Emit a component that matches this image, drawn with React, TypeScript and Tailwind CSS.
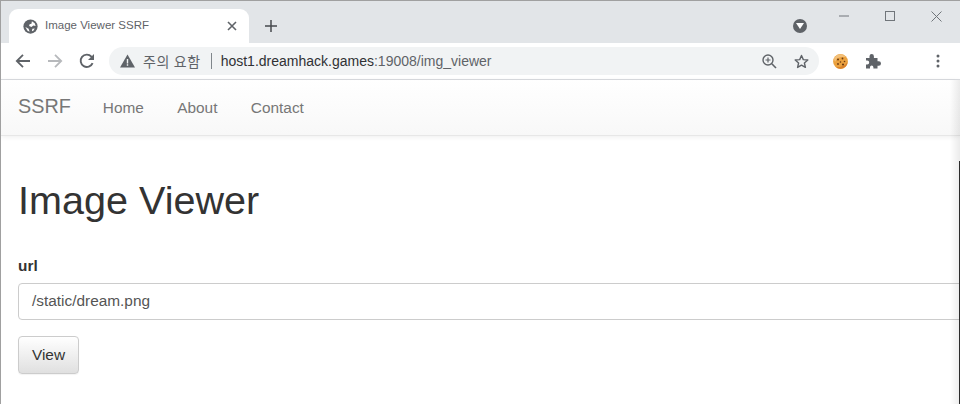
const sans = "font-['Liberation_Sans',Arial,sans-serif]";

function Globe() {
  return (
    <svg width="15" height="15" viewBox="0 0 16 16" className="shrink-0">
      <circle cx="8" cy="8" r="7.600" fill="#5f6368" />
      <path d="M9.500 2.500 12.500 4.500 13.500 7.500 11 7 9 8.500 6.500 7.500 7 5.500 9 5z" fill="#fff" />
      <path d="M2.500 8.500 6 10.500 7 13.500 4.800 12.500z" fill="#fff" />
      <path d="M10 10.500 12.500 10 11 12.500 9.500 13z" fill="#fff" />
    </svg>
  );
}

function Back({ color }: { color: string }) {
  return (
    <svg width="16" height="16" viewBox="0 0 16 16">
      <path d="M15 8H2M8 1.800 1.800 8 8 14.200" fill="none" stroke={color} strokeWidth="1.800" />
    </svg>
  );
}

function TabStrip() {
  return (
    <div className="h-[42px] bg-[#e2e5e8] flex items-end relative shrink-0">
      <div className="ml-[8px] w-[240px] h-[34px] bg-white rounded-t-[9px] flex items-center pl-[14px] pr-[12px] relative">
        <Globe />
        <span className={`${sans} text-[11.500px] text-[#5f6368] ml-[7px] flex-1 whitespace-nowrap`}>Image Viewer SSRF</span>
        <svg width="10" height="10" viewBox="0 0 10 10"><path d="M1 1l8 8M9 1l-8 8" stroke="#5f6368" strokeWidth="1.600" /></svg>
      </div>
      <div className="ml-[15px] mb-[10px] w-[14px] h-[14px] flex items-center justify-center">
        <svg width="12" height="12" viewBox="0 0 13 13"><path d="M6.500 0v13M0 6.500h13" stroke="#45484c" strokeWidth="1.600" /></svg>
      </div>
      <div className="ml-auto flex items-start self-start">
        <div className="mt-[18px] mr-[14px] w-[14px] h-[14px] rounded-full bg-[#5f6368] flex items-center justify-center">
          <svg width="8" height="6" viewBox="0 0 8 6"><path d="M0 0h8L4 6z" fill="#fff" /></svg>
        </div>
        <div className="flex h-[30px] mr-[1px]">
          <div className="w-[46px] flex items-center justify-center">
            <svg width="10" height="10" viewBox="0 0 10 10"><path d="M0 5h10" stroke="#70757a" strokeWidth="1" /></svg>
          </div>
          <div className="w-[46px] flex items-center justify-center">
            <svg width="10" height="10" viewBox="0 0 10 10"><rect x=".5" y=".5" width="9" height="9" fill="none" stroke="#70757a" /></svg>
          </div>
          <div className="w-[46px] flex items-center justify-center">
            <svg width="11" height="11" viewBox="0 0 11 11"><path d="M.5.5l10 10M10.500.5l-10 10" stroke="#70757a" strokeWidth="1" /></svg>
          </div>
        </div>
      </div>
    </div>
  );
}

function Toolbar() {
  return (
    <div className="h-[37px] bg-white border-b border-[#dadce0] flex items-start shrink-0 pt-[4px]">
      <div className="w-[108px] h-[28px] flex items-center pl-[14px] gap-[16px]">
        <Back color="#5f6368" />
        <div className="scale-x-[-1]"><Back color="#b7b9bc" /></div>
        <svg width="16" height="16" viewBox="0 0 16 16">
          <path d="M13.600 10.200A6.200 6.200 0 1 1 12.400 3.600L14.500 5.600" fill="none" stroke="#5f6368" strokeWidth="1.900" />
          <path d="M15 1v6H9z" fill="#5f6368" />
        </svg>
      </div>
      <div className="w-[710px] h-[28px] rounded-[14px] bg-[#f1f3f4] flex items-center pl-[11px] pr-[10px]">
        <svg width="15" height="14" viewBox="0 0 15 14" className="shrink-0">
          <path d="M7.500 0.500 15 13.500H0z" fill="#5f6368" />
          <path d="M6.800 5h1.400v4.500H6.800zM6.800 10.300h1.400v1.400H6.800z" fill="#f1f3f4" />
        </svg>
        <span className="font-['Noto_Sans_CJK_KR',sans-serif] text-[14px] tracking-[0.6px] text-[#5f6368] ml-[8px] whitespace-nowrap">주의 요함</span>
        <div className="w-px h-[16px] bg-[#80868b] ml-[10px]" />
        <span className={`${sans} text-[14px] text-[#303134] ml-[9px] whitespace-nowrap`}>
          host1.dreamhack.games<span className="text-[#5f6368]">:19008/img_viewer</span>
        </span>
        <div className="ml-auto flex items-center gap-[17px]">
          <svg width="15" height="15" viewBox="0 0 15 15">
            <circle cx="6" cy="6" r="5" fill="none" stroke="#5f6368" strokeWidth="1.400" />
            <path d="M9.800 9.800 14 14" stroke="#5f6368" strokeWidth="1.600" />
            <path d="M6 3.500v5M3.500 6h5" stroke="#5f6368" strokeWidth="1.200" />
          </svg>
          <svg width="15" height="15" viewBox="0 0 15 15">
            <path d="M7.500 1.500 9.300 5.600l4.500.4-3.400 3 1 4.400-3.900-2.300-3.900 2.300 1-4.400-3.400-3 4.500-.4z" fill="none" stroke="#5f6368" strokeWidth="1.400" strokeLinejoin="round" />
          </svg>
        </div>
      </div>
      <div className="h-[28px] flex items-center pl-[14px]">
        <svg width="15" height="15" viewBox="0 0 15 15">
          <circle cx="7.500" cy="7.500" r="7.400" fill="#eba23f" />
          <path d="M1 5A7 7 0 0 1 9.500 .5L13 3 8 3 4 4.500 2 8z" fill="#f3c07a" />
          <path d="M3 13A7 7 0 0 0 14.500 8L12 11 7 13z" fill="#d9812b" />
          <circle cx="5" cy="5.500" r="1" fill="#6b3a12" /><circle cx="9.500" cy="4.500" r=".9" fill="#6b3a12" />
          <circle cx="5" cy="10" r=".9" fill="#6b3a12" /><circle cx="10" cy="10.500" r="1.100" fill="#6b3a12" />
          <circle cx="11.500" cy="7.500" r=".8" fill="#6b3a12" /><circle cx="7.500" cy="8" r=".8" fill="#6b3a12" />
        </svg>
        <svg width="16" height="16" viewBox="0 0 16 16" className="ml-[17px]">
          <path d="M1 5h3.500V3.300a2.200 2.200 0 0 1 4.400 0V5h3.600v3.300h1.300a2.200 2.200 0 0 1 0 4.400h-1.300V15.500H8.400v-1.300a1.700 1.700 0 0 0-3.400 0v1.300H1v-4h1.200a2 2 0 0 0 0-4H1z" fill="#5f6368" />
        </svg>
        <svg width="4" height="14" viewBox="0 0 4 14" className="ml-[55px]">
          <circle cx="2" cy="2" r="1.500" fill="#5f6368" /><circle cx="2" cy="7" r="1.500" fill="#5f6368" /><circle cx="2" cy="12" r="1.500" fill="#5f6368" />
        </svg>
      </div>
    </div>
  );
}

function Navbar() {
  return (
    <nav className="h-[56px] bg-gradient-to-b from-white to-[#f8f8f8] border-b border-[#e7e7e7] shadow-[0_1px_5px_rgba(0,0,0,0.07)] flex items-center pl-[17px] pb-[1px] shrink-0">
      <span className="text-[19.800px] text-[#777] mr-[32px]">SSRF</span>
      <div className="flex gap-[33.400px] text-[15.400px] text-[#777] pt-[1px]">
        <span>Home</span>
        <span>About</span>
        <span>Contact</span>
      </div>
    </nav>
  );
}

export default function App() {
  return (
    <div className={`${sans} w-[960px] h-[404px] overflow-hidden bg-white flex flex-col border-t border-l border-[#a0a0a0] relative`}>
      <TabStrip />
      <Toolbar />
      <Navbar />
      <main className="pl-[17px] flex-1 flex flex-col items-start w-[980px]">
        <h1 className="text-[39.600px] leading-[44px] text-[#333] mt-[42px]">Image Viewer</h1>
        <label className="text-[15.400px] leading-[20px] font-bold text-[#333] mt-[34px]">url</label>
        <div className="w-full h-[37px] mt-[7px] border border-[#ccc] rounded-[4px] bg-white pl-[13px] pb-[2px] flex items-center text-[15.400px] text-[#555]">/static/dream.png</div>
        <button className="mt-[16px] w-[61px] h-[38px] rounded-[4px] border border-[#ccc] bg-gradient-to-b from-white to-[#e0e0e0] text-[15.400px] text-[#333] shadow-[0_1px_1px_rgba(0,0,0,0.05)]">View</button>
      </main>
      <div className="absolute right-0 top-[79px] bottom-0 w-[10px] bg-gradient-to-r from-transparent to-[#00000014]" />
      <div className="absolute right-0 top-[160px] bottom-0 w-px bg-[#2b2b2b]" />
    </div>
  );
}
